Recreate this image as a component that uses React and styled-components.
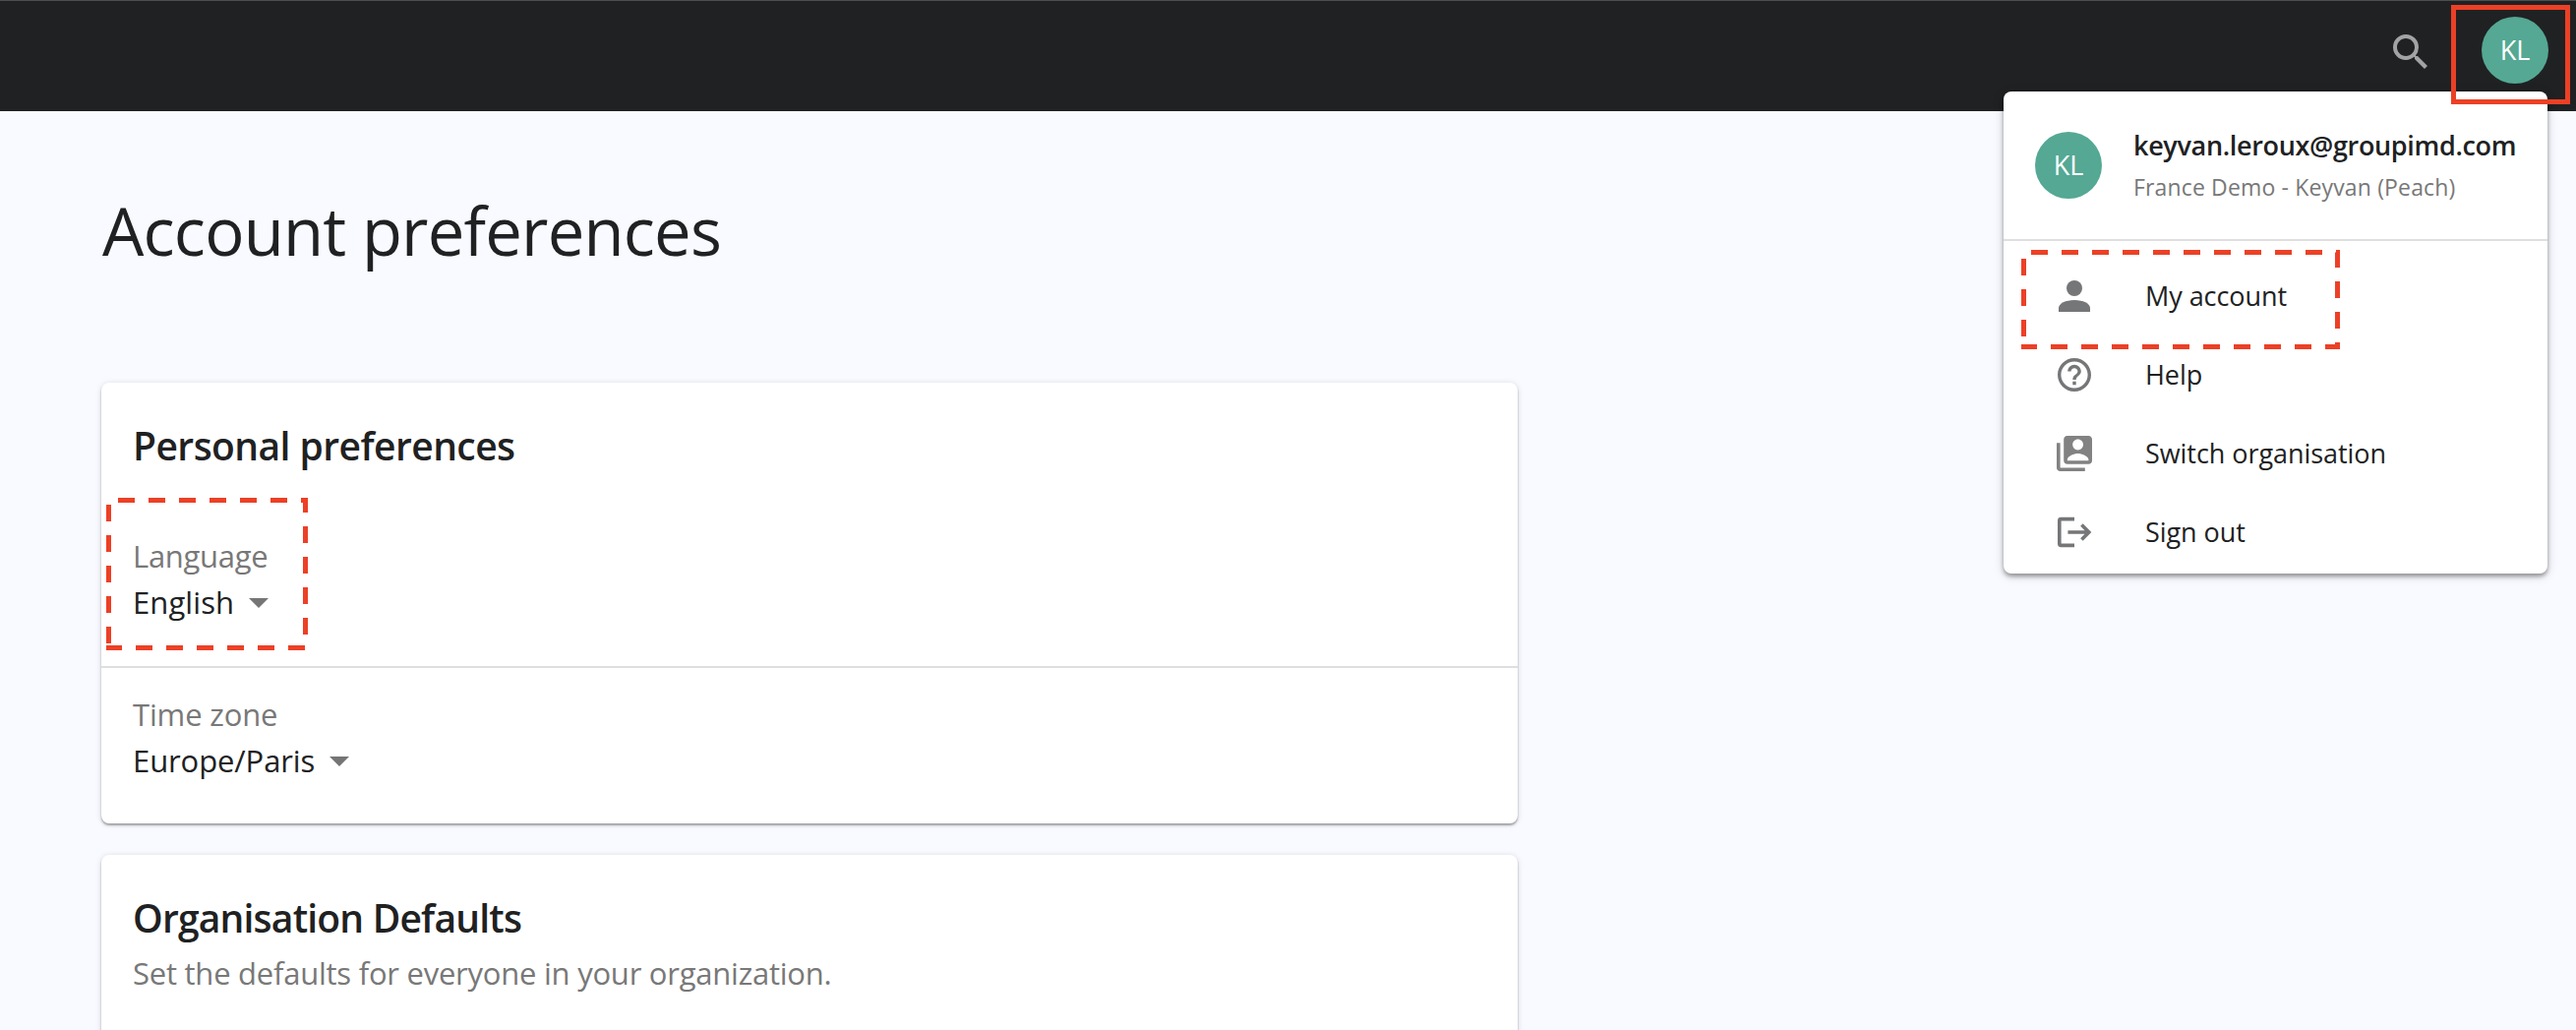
import React from 'react';
import styled, { createGlobalStyle } from 'styled-components';

const GlobalStyle = createGlobalStyle`
  * {
    box-sizing: border-box;
  }
  body {
    margin: 0;
    background: #f9faff;
    color: #202122;
    font-family: 'Open Sans', 'Noto Sans', sans-serif;
    overflow: hidden;
  }
`;

const Page = styled.div`
  position: relative;
  height: 1047px;
  overflow: hidden;
`;

const TopBar = styled.header`
  display: flex;
  align-items: flex-start;
  justify-content: flex-end;
  gap: 48px;
  height: 113px;
  padding: 16px 28px 0 0;
  border-top: 1px solid #4c4e50;
  background: #202123;
`;

const SearchButton = styled.div`
  display: flex;
  height: 48px;
  margin-top: 12px;
  color: #a2a3a5;
`;

const Avatar = styled.div`
  flex: none;
  width: 68px;
  height: 68px;
  border-radius: 50%;
  background: #54a894;
  color: #fff;
  font-size: 27px;
  line-height: 68px;
  text-align: center;
`;

const Line = styled.span`
  display: block;
  width: max-content;
  white-space: nowrap;
  font-size: ${({ $size }) => $size}px;
  font-weight: ${({ $weight }) => $weight || 400};
  line-height: ${({ $height }) => $height}px;
  letter-spacing: ${({ $spacing }) => $spacing || 0}px;
  color: ${({ $muted }) => ($muted ? '#787878' : 'inherit')};
`;

const Content = styled.main`
  display: flex;
  flex-direction: column;
  gap: 32px;
  width: 1543px;
  padding: 73px 0 0 103px;
`;

const Title = styled.h1`
  margin: 0 0 75px;
  padding-left: 1px;
  height: 96px;
  font-size: 67px;
  font-weight: 400;
  line-height: 96px;
  letter-spacing: -0.8px;
  white-space: nowrap;
`;

const Card = styled.section`
  height: ${({ $height }) => $height}px;
  flex: none;
  border-radius: 8px;
  background: #fff;
  box-shadow: 0 2px 2px rgba(0, 0, 0, 0.3), 0 1px 6px rgba(0, 0, 0, 0.14);
`;

const CardHeader = styled.div`
  padding: 37px 32px 0;
`;

const Field = styled.div`
  padding: ${({ $top }) => $top}px 32px 0;
  height: ${({ $height }) => $height}px;
`;

const Select = styled.div`
  display: flex;
  align-items: center;
  gap: 15px;
`;

const Divider = styled.div`
  height: 2px;
  background: #dfdfdf;
`;

const Caret = styled.i`
  border: 10px solid transparent;
  border-top-color: #757575;
  border-bottom: 0;
`;

const Menu = styled.aside`
  position: absolute;
  top: 93px;
  left: 2037px;
  width: 553px;
  height: 490px;
  border-radius: 8px;
  background: #fff;
  box-shadow: 0 3px 4px rgba(0, 0, 0, 0.34), 0 2px 12px rgba(0, 0, 0, 0.16);
`;

const MenuHeader = styled.div`
  display: flex;
  gap: 32px;
  height: 150px;
  padding: 41px 32px 0;
`;

const Identity = styled.div`
  margin-top: -8px;
`;

const MenuList = styled.div`
  padding-top: 16px;
`;

const MenuItem = styled.div`
  display: flex;
  align-items: center;
  gap: 48px;
  height: 80px;
  padding-left: 48px;
  color: #202122;

  svg {
    color: #757678;
  }
`;

const SolidMark = styled.div`
  position: absolute;
  top: 5px;
  left: 2492px;
  width: 121px;
  height: 101px;
  border: 5px solid #ec4026;
`;

const DashedMark = styled.svg`
  position: absolute;
  top: ${({ $top }) => $top}px;
  left: ${({ $left }) => $left}px;
  fill: none;
  stroke: #ec4026;
  stroke-width: 5;
  stroke-dasharray: 17 14;
`;

const Icon = ({ children }) => (
    <svg width="48" height="48" viewBox="0 0 24 24" fill="currentColor">{children}</svg>
);

const SearchIcon = () => (
    <Icon>
        <path d="M15.5 14h-.79l-.28-.27A6.47 6.47 0 0 0 16 9.5 6.5 6.5 0 1 0 9.5 16c1.61 0 3.09-.59 4.23-1.57l.27.28v.79l5 4.99L20.49 19l-4.99-5zm-6 0C7.01 14 5 11.99 5 9.5S7.01 5 9.5 5 14 7.01 14 9.5 11.99 14 9.5 14z" />
    </Icon>
);

const PersonIcon = () => (
    <Icon>
        <circle cx="12" cy="8" r="4" />
        <path d="M12 14c-4.42 0-8 1.79-8 4v2h16v-2c0-2.21-3.58-4-8-4z" />
    </Icon>
);

const HelpIcon = () => (
    <Icon>
        <g transform="translate(1.8 1.8) scale(0.85)">
            <path d="M11 18h2v-2h-2v2zm1-16C6.48 2 2 6.48 2 12s4.48 10 10 10 10-4.48 10-10S17.52 2 12 2zm0 18c-4.41 0-8-3.59-8-8s3.59-8 8-8 8 3.59 8 8-3.59 8-8 8zm0-14c-2.21 0-4 1.79-4 4h2c0-1.1.9-2 2-2s2 .9 2 2c0 2-3 1.75-3 5h2c0-2.25 3-2.5 3-5 0-2.21-1.79-4-4-4z" />
        </g>
    </Icon>
);

const SwitchIcon = () => (
    <Icon>
        <g transform="translate(1.2 1.2) scale(0.9)" fill="#828282">
            <path d="M4 6H2v14c0 1.1.9 2 2 2h14v-2H4V6zm16-4H8c-1.1 0-2 .9-2 2v12c0 1.1.9 2 2 2h12c1.1 0 2-.9 2-2V4c0-1.1-.9-2-2-2zm-6 2c1.66 0 3 1.34 3 3s-1.34 3-3 3-3-1.34-3-3 1.34-3 3-3zm6 12H8v-.5c0-2 4-3.5 6-3.5s6 1.5 6 3.5v.5z" />
        </g>
    </Icon>
);

const SignOutIcon = () => (
    <Icon>
        <path d="M12 5.3H5.2Q4.4 5.3 4.4 6.1V17.9Q4.4 18.7 5.2 18.7H12M8.7 12H19M15.7 8.3L19.4 12L15.7 15.7" fill="none" stroke="currentColor" strokeWidth="1.8" />
    </Icon>
);

const menuItems = [
    { label: 'My account', Glyph: PersonIcon },
    { label: 'Help', Glyph: HelpIcon },
    { label: 'Switch organisation', Glyph: SwitchIcon },
    { label: 'Sign out', Glyph: SignOutIcon },
];

const AccountMenu = () => (
    <Menu>
        <MenuHeader>
            <Avatar>KL</Avatar>
            <Identity>
                <Line $size={27} $weight={600} $height={43} $spacing={-0.33}>keyvan.leroux@groupimd.com</Line>
                <Line $size={23} $height={43} $spacing={0.15} $muted>France Demo - Keyvan (Peach)</Line>
            </Identity>
        </MenuHeader>
        <Divider />
        <MenuList>
            {menuItems.map(({ label, Glyph }) => (
                <MenuItem key={label}>
                    <Glyph />
                    <Line $size={27} $height={40} $spacing={-0.06}>{label}</Line>
                </MenuItem>
            ))}
        </MenuList>
    </Menu>
);

const SelectField = ({ label, value, labelSpacing, spacing, ...rest }) => (
    <Field {...rest}>
        <Line $size={31} $height={47} $spacing={labelSpacing} $muted>{label}</Line>
        <Select>
            <Line $size={31} $height={47} $spacing={spacing}>{value}</Line>
            <Caret />
        </Select>
    </Field>
);

const App = () => (
    <Page>
        <GlobalStyle />
        <TopBar>
            <SearchButton><SearchIcon /></SearchButton>
            <Avatar>KL</Avatar>
        </TopBar>
        <Content>
            <Title>Account preferences</Title>
            <Card $height={448}>
                <CardHeader>
                    <Line $size={39} $weight={600} $height={54} $spacing={-0.55}>Personal preferences</Line>
                </CardHeader>
                <SelectField label="Language" value="English" labelSpacing={-0.3} spacing={0.1} $top={62} $height={197} />
                <Divider />
                <SelectField label="Time zone" value="Europe/Paris" labelSpacing={-0.15} spacing={-0.1} $top={24} $height={158} />
            </Card>
            <Card $height={220}>
                <CardHeader>
                    <Line $size={39} $weight={600} $height={54} $spacing={-0.8}>Organisation Defaults</Line>
                    <Line $size={31} $height={58} $spacing={-0.24} $muted>Set the defaults for everyone in your organization.</Line>
                </CardHeader>
            </Card>
        </Content>
        <AccountMenu />
        <SolidMark />
        <DashedMark $left={2055} $top={254} width="324" height="101">
            <path d="M2.5 88V2.5H321.5V98.5H0" />
        </DashedMark>
        <DashedMark $left={108} $top={506} width="205" height="155">
            <path d="M2.5 148V2.5H202.5V152.5H0" />
        </DashedMark>
    </Page>
);

export default App;
